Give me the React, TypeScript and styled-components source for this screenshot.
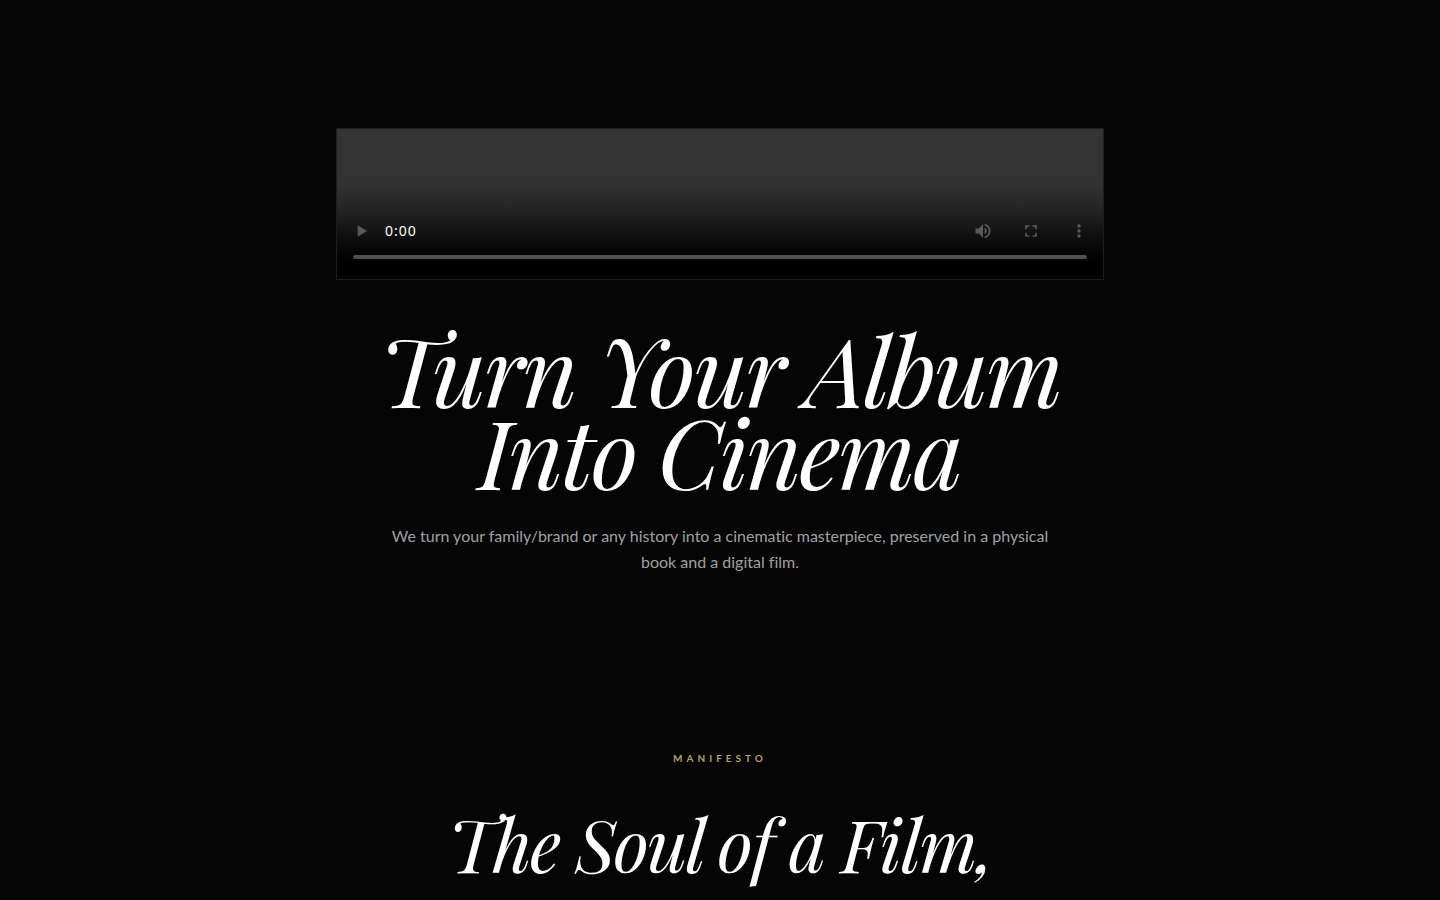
import React from 'react';
import styled, { createGlobalStyle } from 'styled-components';

const GlobalStyle = createGlobalStyle`
  body { margin: 0; background: #050505; color: #fff; font-family: Lato, sans-serif; }
`;
const Page = styled.main`
  padding-bottom: 128px;
`;
const Hero = styled.section`
  display: flex;
  flex-direction: column;
  align-items: center;
  padding: 128px 24px 176px;
`;
const Film = styled.video`
  box-sizing: border-box;
  width: 100%;
  max-width: 768px;
  height: 152px;
  border: 1px solid rgba(255, 255, 255, 0.1);

  &::-webkit-media-controls-current-time-display {
    font-family: "Noto Sans", sans-serif;
    letter-spacing: 1px;
  }
`;
const Title = styled.h1`
  margin: 48px 0 0;
  font: italic 400 96px/0.85 "Playfair Display", "Liberation Serif", serif;
  letter-spacing: -0.025em;
  text-align: center;
`;
const Lead = styled.p`
  max-width: 672px;
  margin: 32px 0 0;
  font-size: 16px;
  line-height: 26px;
  font-variant-ligatures: none;
  color: #a1a1a1;
  text-align: center;
`;
const Label = styled.p`
  margin: 0;
  font-size: 10px;
  font-weight: 700;
  line-height: 15px;
  letter-spacing: 4px;
  text-align: center;
  color: #b8a066;
`;
const Subtitle = styled.h2`
  margin: 32px 0 0;
  font: italic 400 72px/90px "Playfair Display", "Liberation Serif", serif;
  letter-spacing: -0.025em;
  text-align: center;
`;

export default function App() {
  return (
    <Page>
      <GlobalStyle />
      <Hero>
        <Film controls />
        <Title>Turn Your Album<br />Into Cinema</Title>
        <Lead>We turn your family/brand or any history into a cinematic masterpiece, preserved in a physical book and a digital film.</Lead>
      </Hero>
      <section>
        <Label>MANIFESTO</Label>
        <Subtitle>The Soul of a Film,</Subtitle>
      </section>
    </Page>
  );
}
